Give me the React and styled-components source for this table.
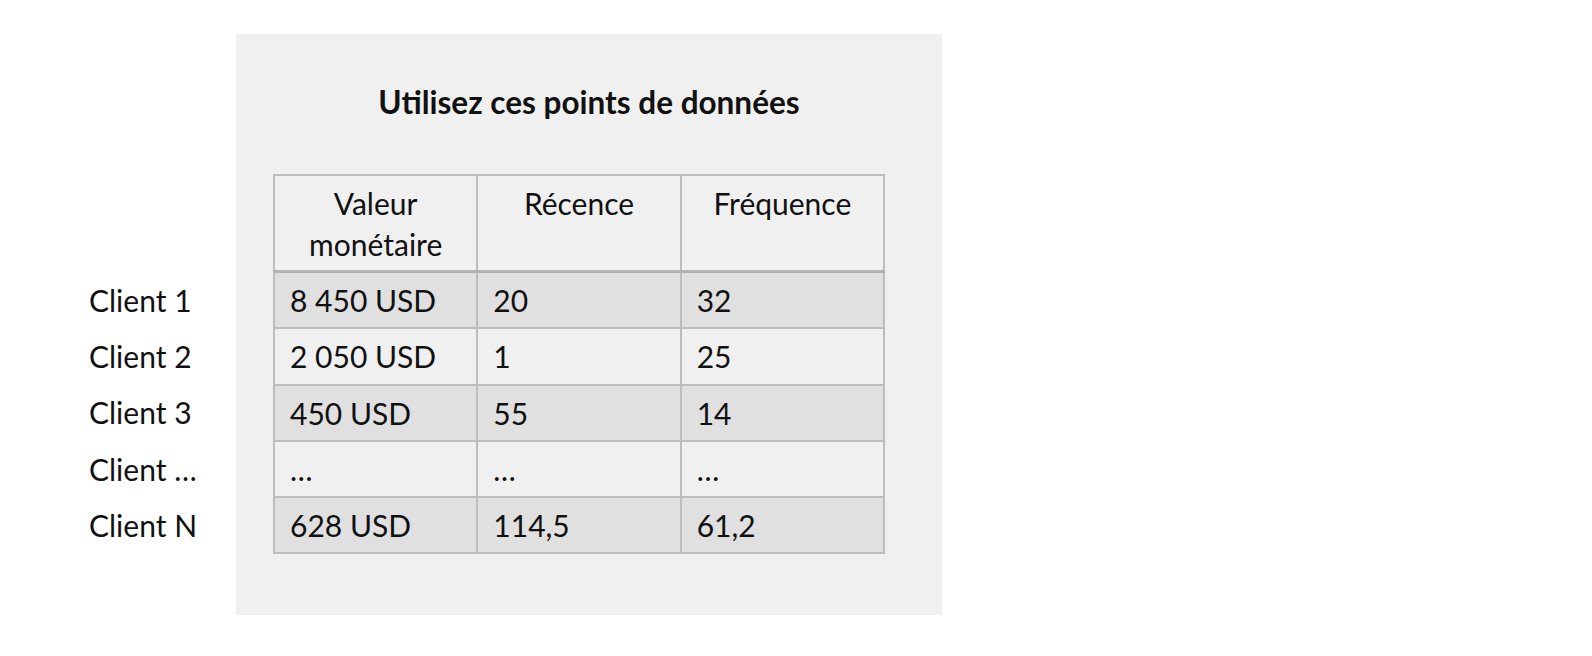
import React from 'react';
import styled, { createGlobalStyle } from 'styled-components';

const GlobalStyle = createGlobalStyle`
  body {
    margin: 0;
    background: #ffffff;
    font-family: "Lato", "Open Sans", sans-serif;
    color: #111111;
  }
`;

const Page = styled.div`
  display: flex;
  align-items: flex-start;
  width: 1592px;
  height: 656px;
  padding-top: 34px;
  box-sizing: border-box;
`;

const LabelColumn = styled.div`
  width: 236px;
  box-sizing: border-box;
  padding-left: 89px;
  padding-top: 238px;
  display: flex;
  flex-direction: column;
`;

const ClientLabel = styled.div`
  height: 56.2px;
  display: flex;
  align-items: center;
  font-size: 30px;
  white-space: nowrap;
`;

const Panel = styled.section`
  width: 706px;
  height: 581px;
  background: #f0f0f0;
  box-sizing: border-box;
  padding: 48px 37px 0 37px;
  display: flex;
  flex-direction: column;
`;

const Title = styled.h2`
  margin: 0;
  height: 92px;
  text-align: center;
  font-size: 31.5px;
  font-weight: 700;
  line-height: 40px;
`;

const Table = styled.table`
  width: 612px;
  border-collapse: collapse;
  table-layout: fixed;
  font-size: 30px;
`;

const HeadCell = styled.th`
  height: 87px;
  border: 2px solid #bdbdbd;
  border-bottom: 3px solid #b3b3b3;
  vertical-align: top;
  padding: 7px 6px 0;
  font-weight: 400;
  line-height: 41px;
  text-align: center;
  background: #f0f0f0;
`;

const Row = styled.tr`
  background: ${(p) => (p.$shade ? '#e0e0e0' : '#f0f0f0')};
`;

const Cell = styled.td`
  height: 54.3px;
  border: 2px solid #bdbdbd;
  padding: 0 15px;
  line-height: 54px;
  white-space: nowrap;
`;

const clients = ['Client 1', 'Client 2', 'Client 3', 'Client …', 'Client N'];

const rows = [
  ['8 450 USD', '20', '32'],
  ['2 050 USD', '1', '25'],
  ['450 USD', '55', '14'],
  ['…', '…', '…'],
  ['628 USD', '114,5', '61,2'],
];

export default function App() {
  return (
    <>
      <GlobalStyle />
      <Page>
        <LabelColumn>
          {clients.map((c) => (
            <ClientLabel key={c}>{c}</ClientLabel>
          ))}
        </LabelColumn>
        <Panel>
          <Title>Utilisez ces points de données</Title>
          <Table>
            <thead>
              <tr>
                <HeadCell>Valeur<br />monétaire</HeadCell>
                <HeadCell>Récence</HeadCell>
                <HeadCell>Fréquence</HeadCell>
              </tr>
            </thead>
            <tbody>
              {rows.map((r, i) => (
                <Row key={i} $shade={i % 2 === 0}>
                  {r.map((v, j) => (
                    <Cell key={j}>{v}</Cell>
                  ))}
                </Row>
              ))}
            </tbody>
          </Table>
        </Panel>
      </Page>
    </>
  );
}
